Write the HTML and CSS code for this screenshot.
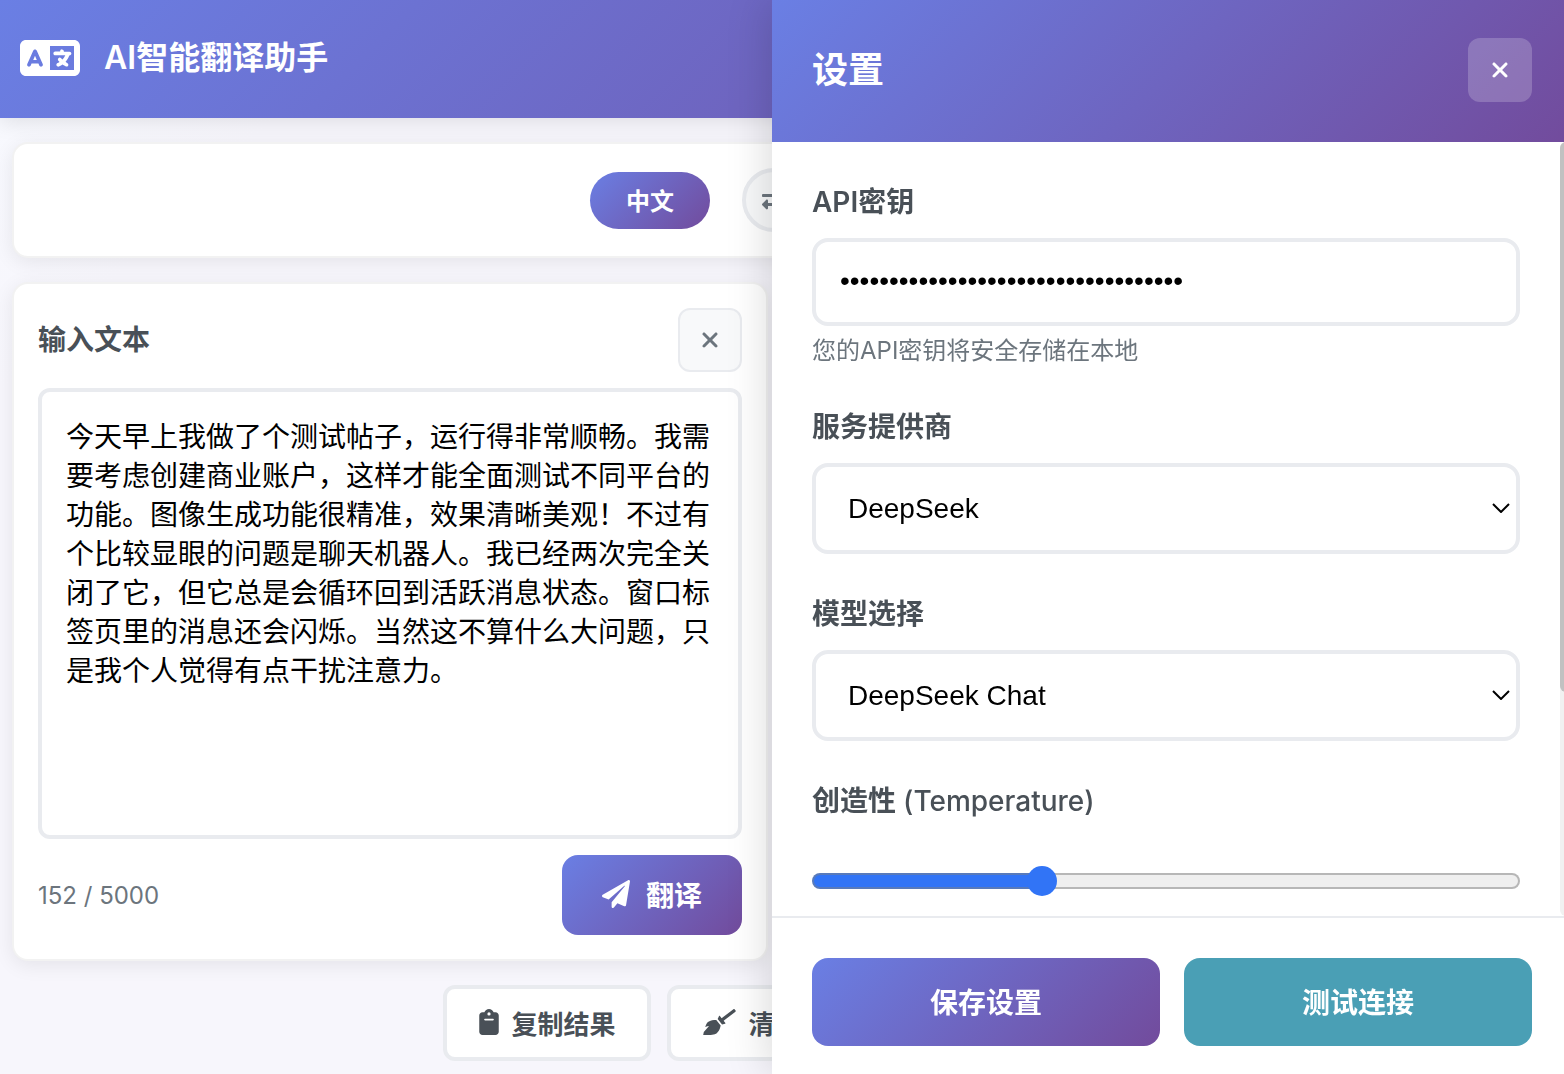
FILE: index.html
```
<!DOCTYPE html>
<html lang="zh-CN">
    <head>
        <meta charset="utf-8">
        <meta name="viewport" content="width=device-width, initial-scale=1">
        <title>AI智能翻译助手</title>
        <link rel="stylesheet" href="styles.css">
    </head>
    <body>
        <div class="app">
            <header class="header">
                <svg class="logo" viewBox="0 0 640 512" aria-hidden="true"><path d="M0 128C0 92.700 28.700 64 64 64H576c35.300 0 64 28.700 64 64V384c0 35.300-28.700 64-64 64H64c-35.300 0-64-28.700-64-64V128zm320 0V384H576V128H320zM178.300 175.900c-3.200-7.200-10.400-11.900-18.300-11.900s-15.100 4.700-18.300 11.900l-64 144c-4.500 10.100 .1 21.900 10.200 26.400s21.900-.1 26.400-10.200l8.900-20.100h73.600l8.900 20.100c4.500 10.100 16.300 14.700 26.400 10.200s14.700-16.300 10.200-26.400l-64-144zM160 233.200L179 276H141l19-42.800zM448 164c11 0 20 9 20 20v4h44 16c11 0 20 9 20 20s-9 20-20 20h-2l-1.600 4.500c-8.900 24.400-22.400 46.600-39.600 65.400c.9 .6 1.800 1.100 2.700 1.600l18.900 11.300c9.500 5.700 12.500 18 6.900 27.400s-18 12.500-27.400 6.900l-18.900-11.300c-4.500-2.700-8.800-5.500-13.100-8.500c-10.600 7.500-21.900 14-34 19.400l-3.600 1.600c-10.100 4.500-21.900-.1-26.400-10.200s.1-21.900 10.200-26.400l3.600-1.600c6.400-2.900 12.600-6.100 18.500-9.800l-12.200-12.200c-7.800-7.800-7.800-20.500 0-28.300s20.500-7.800 28.300 0l14.600 14.600 .5 .5c12.400-13.100 22.500-28.300 29.800-45H448 376c-11 0-20-9-20-20s9-20 20-20h52v-4c0-11 9-20 20-20z"/></svg>
                <h1>AI智能翻译助手</h1>
            </header>
            <main class="main">
                <div class="card langBar">
                    <button class="langBtn" type="button">中文</button>
                    <button class="swapBtn" type="button" aria-label="切换语言">
                        <svg class="icon24" viewBox="0 0 512 512" aria-hidden="true"><path d="M0 168v-16c0-13.255 10.745-24 24-24h360V80c0-21.367 25.899-32.042 40.971-16.971l80 80c9.372 9.373 9.372 24.569 0 33.941l-80 80C409.956 271.982 384 261.456 384 240v-48H24c-13.255 0-24-10.745-24-24zm488 152H128v-48c0-21.314-25.862-32.080-40.971-16.971l-80 80c-9.372 9.373-9.372 24.569 0 33.941l80 80C102.057 463.997 128 453.437 128 432v-48h360c13.255 0 24-10.745 24-24v-16c0-13.255-10.745-24-24-24z"/></svg>
                    </button>
                    <button class="langBtn target" type="button" aria-label="英文"></button>
                </div>
                <div class="columns">
                    <section class="card panel">
                        <div class="panelTop">
                            <h2><label for="source">输入文本</label></h2>
                            <button class="clearBtn" type="button" aria-label="清除">
                                <svg class="xmark" viewBox="0 0 384 512" aria-hidden="true"><path d="M342.600 150.600c12.500-12.500 12.500-32.800 0-45.300s-32.800-12.500-45.300 0L192 210.700 86.600 105.400c-12.500-12.500-32.800-12.500-45.300 0s-12.500 32.800 0 45.300L146.700 256 41.400 361.400c-12.500 12.500-12.500 32.800 0 45.300s32.800 12.500 45.300 0L192 301.300 297.400 406.600c12.500 12.500 32.800 12.500 45.300 0s12.500-32.800 0-45.300L237.300 256 342.600 150.600z"/></svg>
                            </button>
                        </div>
                        <textarea id="source" maxlength="5000">今天早上我做了个测试帖子，运行得非常顺畅。我需要考虑创建商业账户，这样才能全面测试不同平台的功能。图像生成功能很精准，效果清晰美观！不过有个比较显眼的问题是聊天机器人。我已经两次完全关闭了它，但它总是会循环回到活跃消息状态。窗口标签页里的消息还会闪烁。当然这不算什么大问题，只是我个人觉得有点干扰注意力。</textarea>
                        <div class="panelBottom">
                            <span class="count">152 / 5000</span>
                            <button class="translateBtn" type="button">
                                <svg class="icon28" viewBox="0 0 512 512" aria-hidden="true"><path d="M476 3.200L12.500 270.600c-18.100 10.400-15.800 35.600 2.200 43.200L121 358.400l287.300-253.200c5.500-4.900 13.300 2.600 8.600 8.300L176 407v80.500c0 23.600 28.500 32.900 42.500 15.800L282 426l124.600 52.200c14.200 6 30.400-2.900 33-18.200l72-432C515 7.800 493.300-6.800 476 3.200z"/></svg>
                                翻译
                            </button>
                        </div>
                    </section>
                    <section class="card panel"></section>
                </div>
                <div class="actions">
                    <button class="actionBtn" type="button">
                        <svg class="clipIcon" viewBox="0 0 384 512" aria-hidden="true"><path d="M192 0c-41.800 0-77.400 26.700-90.500 64H64C28.700 64 0 92.700 0 128V448c0 35.300 28.700 64 64 64H320c35.300 0 64-28.700 64-64V128c0-35.300-28.700-64-64-64H282.500C269.400 26.700 233.800 0 192 0zm0 64a32 32 0 1 1 0 64 32 32 0 1 1 0-64zM112 192H272c8.800 0 16 7.200 16 16s-7.200 16-16 16H112c-8.800 0-16-7.200-16-16s7.200-16 16-16z"/></svg>
                        复制结果
                    </button>
                    <button class="actionBtn" type="button">
                        <svg class="broomIcon" viewBox="0 0 640 512" aria-hidden="true"><path d="M256.470 216.770l86.730 109.180s-16.600 102.360-76.570 150.120C206.660 523.850 0 510.190 0 510.190s3.800-23.140 11-55.430l94.620-112.170c3.970-4.700-.87-11.620-6.650-9.500l-60.400 22.090c14.440-41.660 32.720-80.040 54.600-97.470 59.970-47.760 163.300-40.940 163.300-40.940zM636.530 31.030l-19.860-25c-5.490-6.900-15.520-8.050-22.410-2.560l-232.480 177.800-34.140-42.970c-5.090-6.410-15.140-5.210-18.590 2.210l-25.330 54.550 86.730 109.180 58.800-12.450c8-1.690 11.420-11.200 6.340-17.600l-34.090-42.920 232.480-177.800c6.890-5.480 8.040-15.530 2.550-22.440z"/></svg>
                        清空全部
                    </button>
                    <button class="actionBtn" type="button">
                        <svg class="icon28" viewBox="0 0 512 512" aria-hidden="true"><path d="M256 0a256 256 0 1 0 0 512a256 256 0 1 0 0-512zM232 120h48v126l80 54-26 40-102-68z"/></svg>
                        历史记录
                    </button>
                </div>
            </main>
        </div>

        <aside class="drawer">
            <div class="drawerHeader">
                <h2>设置</h2>
                <button class="closeBtn" type="button" aria-label="关闭">
                    <svg class="xmark" viewBox="0 0 384 512" aria-hidden="true"><path d="M342.600 150.600c12.500-12.500 12.500-32.800 0-45.300s-32.800-12.500-45.300 0L192 210.700 86.600 105.400c-12.500-12.500-32.800-12.500-45.300 0s-12.500 32.800 0 45.300L146.700 256 41.400 361.400c-12.500 12.500-12.500 32.800 0 45.300s32.800 12.500 45.300 0L192 301.300 297.400 406.600c12.500 12.500 32.800 12.500 45.300 0s12.500-32.800 0-45.300L237.300 256 342.600 150.600z"/></svg>
                </button>
            </div>
            <div class="drawerBody">
                <div class="fields">
                    <div class="field">
                        <label for="apiKey">API密钥</label>
                        <input class="textInput" type="password" id="apiKey" value="sk-00000000000000000000000000000000">
                        <small>您的API密钥将安全存储在本地</small>
                    </div>
                    <div class="field">
                        <label for="provider">服务提供商</label>
                        <div class="selectBox">
                            <select id="provider">
                                <option>DeepSeek</option>
                            </select>
                            <svg viewBox="0 0 18 10" aria-hidden="true"><path d="M1 1l8 8 8-8"/></svg>
                        </div>
                    </div>
                    <div class="field">
                        <label for="model">模型选择</label>
                        <div class="selectBox">
                            <select id="model">
                                <option>DeepSeek Chat</option>
                            </select>
                            <svg viewBox="0 0 18 10" aria-hidden="true"><path d="M1 1l8 8 8-8"/></svg>
                        </div>
                    </div>
                    <div class="field">
                        <label for="temperature">创造性 <span class="en">(Temperature)</span></label>
                        <input class="slider" type="range" id="temperature" min="0.1" max="2" step="0.1" value="0.7">
                    </div>
                </div>
                <div class="scrollbar"><div class="thumb"></div></div>
            </div>
            <div class="drawerFooter">
                <button class="saveBtn" type="button">保存设置</button>
                <button class="testBtn" type="button">测试连接</button>
            </div>
        </aside>
    </body>
</html>
```
FILE: styles.css
```
*{
    margin: 0;
    padding: 0;
    box-sizing: border-box;
}
:root{
    --brand: linear-gradient(135deg, #6a7fe4 0%, #724b9c 100%);
    --line: #e9ebef;
    --dark: #495057;
    --muted: #6c757d;
}
body{
    overflow: hidden;
    font-family: Inter, "Noto Sans CJK SC", sans-serif;
    background: linear-gradient(135deg, #f8faff 0%, #f7f6fc 15%, #f7f6fc 100%);
}
button, input, select, textarea{
    font-family: inherit;
}
button{
    border: none;
    cursor: pointer;
    display: flex;
    align-items: center;
    justify-content: center;
}
svg{
    fill: currentColor;
    flex-shrink: 0;
}
.app{
    min-height: 100vh;
    display: flex;
    flex-direction: column;
}
.header{
    height: 118px;
    padding: 0 20px 2px;
    display: flex;
    align-items: center;
    gap: 24px;
    color: #fff;
    background: var(--brand);
    box-shadow: 0 4px 20px rgba(0,0,0,0.1);
}
.header h1{
    font-size: 32px;
    line-height: 40px;
    font-weight: 600;
}
.logo{
    width: 60px;
    height: 48px;
}
.main{
    flex: 1;
    display: flex;
    flex-direction: column;
    gap: 24px;
    padding: 24px 12px 13px;
}
.card{
    background: #fff;
    border: 2px solid rgba(0,0,0,0.05);
    border-radius: 16px;
    box-shadow: 0 4px 20px rgba(0,0,0,0.08);
}
.langBar{
    height: 116px;
    display: flex;
    align-items: center;
    justify-content: center;
    gap: 32px;
}
.langBtn{
    width: 120px;
    height: 57px;
    padding-bottom: 2px;
    border-radius: 40px;
    color: #fff;
    font-size: 24px;
    font-weight: 600;
    background: var(--brand);
}
.target{
    width: 136px;
}
.swapBtn{
    width: 64px;
    height: 64px;
    border: 4px solid var(--line);
    border-radius: 50%;
    background: #f8f9fa;
    color: var(--muted);
}
.icon24{
    width: 24px;
    height: 24px;
}
.icon28{
    width: 28px;
    height: 28px;
}
.xmark{
    width: 18px;
    height: 24px;
}
.columns{
    flex: 1;
    display: grid;
    grid-template-columns: 1fr 1fr;
    gap: 28px;
}
.panel{
    padding: 24px;
    display: flex;
    flex-direction: column;
    gap: 16px;
}
.panelTop, .panelBottom{
    display: flex;
    align-items: center;
    justify-content: space-between;
}
.panelTop h2{
    font-size: 28px;
    line-height: 40px;
    font-weight: 600;
    color: var(--dark);
}
.clearBtn{
    width: 64px;
    height: 64px;
    border: 2px solid var(--line);
    border-radius: 12px;
    background: #f8f9fa;
    color: var(--muted);
}
textarea{
    flex: 1;
    width: 100%;
    padding: 26px 24px;
    border: 4px solid var(--line);
    border-radius: 12px;
    resize: none;
    outline: none;
    color: #000;
    background: #fff;
    font-size: 28px;
    line-height: 39px;
}
.count{
    font-size: 24px;
    color: var(--muted);
}
.translateBtn{
    height: 80px;
    padding: 0 40px 2px;
    gap: 16px;
    border-radius: 16px;
    color: #fff;
    font-size: 28px;
    font-weight: 600;
    background: var(--brand);
}
.actions{
    display: flex;
    justify-content: center;
    gap: 16px;
}
.actionBtn{
    height: 76px;
    padding: 0 32px 2px;
    gap: 12px;
    border: 4px solid var(--line);
    border-radius: 12px;
    background: #fff;
    color: var(--dark);
    font-size: 26px;
    font-weight: 600;
}
.clipIcon{
    width: 20px;
    height: 26px;
}
.broomIcon{
    width: 33px;
    height: 26px;
}

/* settings drawer, its right edge runs a little past the window */
.drawer{
    position: fixed;
    top: 0;
    right: -8px;
    bottom: 0;
    width: 800px;
    display: flex;
    flex-direction: column;
    background: #fff;
    box-shadow: -4px 0 40px rgba(0,0,0,0.15);
}
.drawerHeader{
    height: 142px;
    padding: 0 40px 2px;
    display: flex;
    align-items: center;
    justify-content: space-between;
    flex-shrink: 0;
    color: #fff;
    background: var(--brand);
}
.drawerHeader h2{
    font-size: 36px;
    line-height: 48px;
    font-weight: 600;
}
.closeBtn{
    width: 64px;
    height: 64px;
    border-radius: 12px;
    color: #fff;
    background: rgba(255,255,255,0.2);
}
.drawerBody{
    flex: 1;
    min-height: 0;
    display: flex;
}
.fields{
    flex: 1;
    padding: 40px 40px 0;
    overflow: hidden;
}
.scrollbar{
    width: 12px;
    background: #f1f1f1;
    border-radius: 6px;
}
.thumb{
    height: 71%;
    background: #c1c1c1;
    border-radius: 6px;
}
.field{
    margin-bottom: 40px;
}
.field:last-child{
    margin-bottom: 0;
}
.field label{
    display: block;
    margin-bottom: 16px;
    font-size: 28px;
    line-height: 40px;
    font-weight: 600;
    color: var(--dark);
}
.field .en{
    font-weight: 500;
}
.field small{
    display: block;
    margin-top: 8px;
    font-size: 24px;
    line-height: 33px;
    color: var(--muted);
}
.textInput, .field select{
    display: block;
    width: 100%;
    border: 4px solid var(--line);
    border-radius: 16px;
    outline: none;
    color: #000;
    background: #fff;
    font-family: "Liberation Sans", sans-serif;
    font-size: 28px;
}
.textInput{
    height: 88px;
    padding: 0 24px 2px;
}
.field select{
    height: 91px;
    padding: 0 32px;
    appearance: none;
}
.selectBox{
    position: relative;
}
.selectBox svg{
    position: absolute;
    right: 10px;
    top: 40px;
    width: 18px;
    height: 10px;
    fill: none;
    stroke: #000;
    stroke-width: 2;
    pointer-events: none;
}
.slider{
    display: block;
    width: 100%;
    height: 32px;
    margin-top: 44px;
    appearance: none;
    background: none;
}
.slider::-webkit-slider-runnable-track{
    height: 16px;
    border: 2px solid rgba(128,128,128,0.5);
    border-radius: 8px;
    background: linear-gradient(to right, #3174f6 32%, #efefef 32%) border-box;
}
.slider::-webkit-slider-thumb{
    appearance: none;
    width: 30px;
    height: 30px;
    margin-top: -9px;
    border-radius: 50%;
    background: #3174f6;
}
.drawerFooter{
    display: flex;
    gap: 24px;
    flex-shrink: 0;
    padding: 40px 40px 28px;
    border-top: 2px solid var(--line);
}
.saveBtn, .testBtn{
    flex: 1;
    height: 88px;
    padding-bottom: 2px;
    border-radius: 16px;
    color: #fff;
    font-size: 28px;
    font-weight: 600;
}
.saveBtn{
    background: var(--brand);
}
.testBtn{
    background: #4a9fb5;
}
```
